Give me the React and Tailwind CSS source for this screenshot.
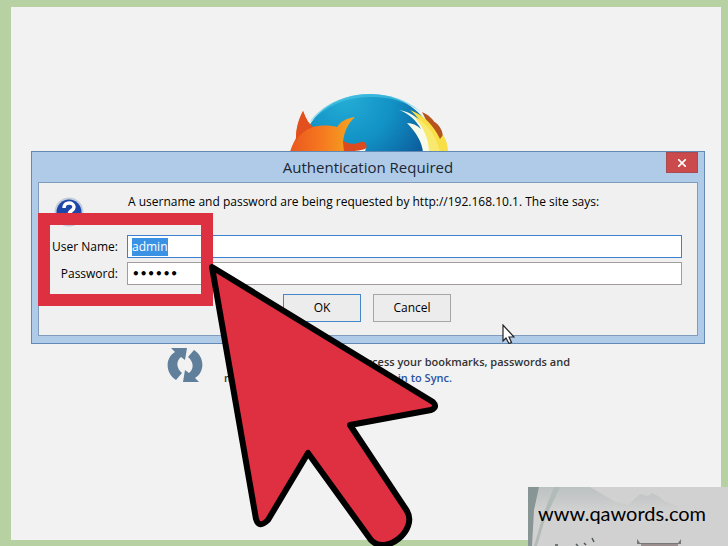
import { useEffect, useRef } from "react";

function FirefoxLogo() {
  return (
    <svg className="h-[58px] w-[160px] shrink-0" viewBox="290 94 160 58" aria-label="Firefox">
      <defs>
        <radialGradient id="globe" gradientUnits="userSpaceOnUse" cx="345" cy="96" r="100">
          <stop offset="0" stopColor="#25aed6" />
          <stop offset="0.5" stopColor="#1190c4" />
          <stop offset="1" stopColor="#0b5596" />
        </radialGradient>
        <linearGradient id="fur" gradientUnits="userSpaceOnUse" x1="292" y1="0" x2="350" y2="0">
          <stop offset="0" stopColor="#ea5a1e" />
          <stop offset="0.5" stopColor="#f6781f" />
          <stop offset="1" stopColor="#f3a020" />
        </linearGradient>
      </defs>
      <path d="M302 152C303 116 335 94 370 94C398 94 420 108 431 130L434 152Z" fill="url(#globe)" />
      <path d="M309 123C322 104 345 94 370 94C390 94 408 100 421 112C408 103 393 97 370 97C345 97 326 106 309 123Z" fill="#4cc8e6" opacity="0.6" />
      <path d="M422 112C429 115 433 119 436 125L433 121C440 125 443 131 443 138L440 148Z" fill="#b5541d" />
      <path d="M410 110C424 115 434 126 440 139L443 135C447 141 448 147 448 152H430C432 140 424 122 410 110Z" fill="#f8df45" />
      <path d="M399 110C418 113 432 130 438 152H423C422 142 416 132 407 123C412 123 417 125 421 129C416 120 408 113 399 110Z" fill="#f8faea" />
      <path d="M414 117C426 122 436 134 440 152H429C429 139 423 126 414 117Z" fill="#f9e96f" />
      <path d="M342 140C347 144 354 145 361 142C365 141 368 145 366 149L362 152H340Z" fill="#dd4a1d" />
      <path d="M366 147C366 150 361 150 354 151L356 152H365Z" fill="#fff" />
      <path d="M290 152C292 145 294 142 296 138C296 127 299 119 303 111C306 119 309 124 313 127C320 125 330 125 337 127C341 121 347 118 355 117C348 123 344 132 343 142L344 152Z" fill="url(#fur)" />
      <path d="M296 141C296 127 299 119 303 111C306 119 309 124 313 127C305 130 300 134 296 141Z" fill="#e2501e" />
    </svg>
  );
}

function SyncIcon() {
  return (
    <svg className="h-9 w-9 shrink-0" viewBox="0 0 36 36" aria-hidden="true">
      <g fill="#5f7f9a">
        <path d="M4 1H20L18 13L14 10C9 14 9 21 15 26L9 33C-2 26 -2 11 8 5Z" />
        <path d="M4 1H20L18 13L14 10C9 14 9 21 15 26L9 33C-2 26 -2 11 8 5Z" transform="rotate(180 18 18)" />
      </g>
    </svg>
  );
}

function AuthDialog() {
  const user = useRef(null);
  useEffect(() => {
    user.current.focus();
    user.current.select();
  }, []);
  return (
    <form
      role="dialog"
      aria-labelledby="dialog-title"
      onSubmit={(e) => e.preventDefault()}
      className="absolute top-[144px] right-4 left-5 border border-[#6389b5] bg-[#b0cbe8] px-1.5 pb-[7px]"
    >
      <header className="relative flex h-[30px] items-center justify-center">
        <h1 id="dialog-title" className="text-[15px] text-[#1c2733]">Authentication Required</h1>
        <button
          type="button"
          aria-label="Close"
          className="absolute top-0 right-0 flex h-[21px] w-8 items-center justify-center border border-[#a94a50] bg-[#cb4a4c]"
        >
          <svg className="h-2 w-2" viewBox="0 0 8 8" stroke="#fff" strokeWidth="1.6" aria-hidden="true">
            <path d="M0 0L8 8M8 0L0 8" />
          </svg>
        </button>
      </header>
      <div className="border border-[#7f9cbd] bg-[#f0f0f0] pt-2.5 pr-[15px] pb-[13px] pl-[13px] text-[12px] text-black">
        <div className="flex h-[42px] items-start">
          <svg className="mt-1 ml-0.5 h-[30px] w-[30px]" viewBox="0 0 30 30" aria-hidden="true">
            <circle cx="15" cy="15" r="14.5" fill="#c4cedb" />
            <circle cx="15" cy="15" r="12.5" fill="#1c46a8" />
            <path d="M10 11C10 4 20 5 20 10C20 14 15 13 15 18" fill="none" stroke="#fff" strokeWidth="3.5" />
            <circle cx="15" cy="22" r="2" fill="#fff" />
          </svg>
          <p className="ml-11 leading-[18px] whitespace-nowrap">
            A username and password are being requested by http://192.168.10.1. The site says:
          </p>
        </div>
        <div className="grid grid-cols-[66px_1fr] items-center gap-x-[9px] gap-y-1">
          <label htmlFor="user" className="text-right whitespace-nowrap">User Name:</label>
          <div className="flex h-[23px] border border-[#3f7fd0] bg-white px-1">
            <input
              id="user"
              ref={user}
              defaultValue="admin"
              className="w-full min-w-0 bg-white outline-none selection:bg-[#3a92e4] selection:text-white"
            />
          </div>
          <label htmlFor="pass" className="text-right whitespace-nowrap">Password:</label>
          <div className="flex h-[23px] border border-[#a39c9c] bg-white px-1">
            <input
              id="pass"
              type="password"
              defaultValue="secret"
              className="w-full min-w-0 bg-white font-['DejaVu_Sans',sans-serif] font-bold outline-none"
            />
          </div>
        </div>
        <div className="mt-[9px] flex justify-center gap-3">
          <button type="submit" className="h-7 w-[78px] border border-[#4585c9] bg-[#ececec]">OK</button>
          <button type="button" className="h-7 w-[78px] border border-[#a5a5a5] bg-[#ececec]">Cancel</button>
        </div>
      </div>
    </form>
  );
}

export default function App() {
  return (
    <div className="relative h-screen overflow-hidden bg-[#b8d1a2] pt-[7px] pr-[7px] pb-1.5 pl-[11px] font-['Open_Sans','Noto_Sans',sans-serif]">
      <main className="relative h-full bg-[#f2f2f2]">
        <div className="flex justify-center pt-[87px] pl-2">
          <FirefoxLogo />
        </div>
        <section className="flex items-start pt-[195px] pl-[156px]">
          <SyncIcon />
          <div className="ml-[21px] w-[346px] pt-[7px] text-[11px] leading-4 font-semibold text-[#333]">
            <p className="text-right whitespace-nowrap">access your bookmarks, passwords and</p>
            <p className="flex w-[228px] justify-between whitespace-nowrap">
              <span>m</span>
              <a href="#sync" className="text-[#2a52a5]">Sign in to Sync.</a>
            </p>
          </div>
        </section>
        <AuthDialog />
      </main>

      <div className="absolute top-[213px] left-[38px] h-[93px] w-[175px] border-[12px] border-[#dd3040]" />
      <svg className="absolute top-[260px] left-[200px] h-[286px] w-[250px]" viewBox="200 260 250 286" aria-hidden="true">
        <path
          d="M212 267L433 402Q438 407 431 410L350 425L407 511C418 530 386 556 371 540L308 453L268 520Q259 529 256 519Z"
          fill="#de3040"
          stroke="#000"
          strokeWidth="6"
          strokeLinejoin="round"
        />
      </svg>
      <svg className="absolute top-[324px] left-[502px] h-5 w-[13px]" viewBox="0 0 13 20" aria-hidden="true">
        <path d="M1 1V17L4 14L7 19.5L9.500 18.500L7 13H12Z" fill="#fff" stroke="#222" strokeWidth="1.2" />
      </svg>

      <footer className="absolute right-0 bottom-0 h-[59px] w-[200px] overflow-hidden bg-[#d1d1d1]">
        <svg className="absolute inset-0 h-full w-full" viewBox="0 0 200 59" aria-hidden="true">
          <defs>
            <linearGradient id="mist" x1="0" y1="0" x2="0" y2="1">
              <stop offset="0" stopColor="#bcc1c1" />
              <stop offset="1" stopColor="#d1d1d1" />
            </linearGradient>
          </defs>
          <path d="M0 0H62L86 14L100 18L112 7L120 9L124 6L130 9L138 15L150 19V24H0Z" fill="url(#mist)" />
          <path d="M0 0H11L6 23L4 59H0Z" fill="#879694" />
          <path d="M26 0H32L17 32L9 59H6L15 28Z" fill="#b3bbb9" />
          <path d="M109 52V57H153V52L150 56H112Z" fill="#777" />
          <path d="M113 57H150V59H113Z" fill="#998d8d" />
          <path d="M64 51L66 55M56 56L58 58M48 57L50 59M27 58H30" stroke="#4d5757" strokeWidth="1.5" />
        </svg>
        <p className="relative px-2.5 pt-3 font-['Lato','Open_Sans',sans-serif] text-[20px] leading-7 text-black">www.qawords.com</p>
      </footer>
    </div>
  );
}
